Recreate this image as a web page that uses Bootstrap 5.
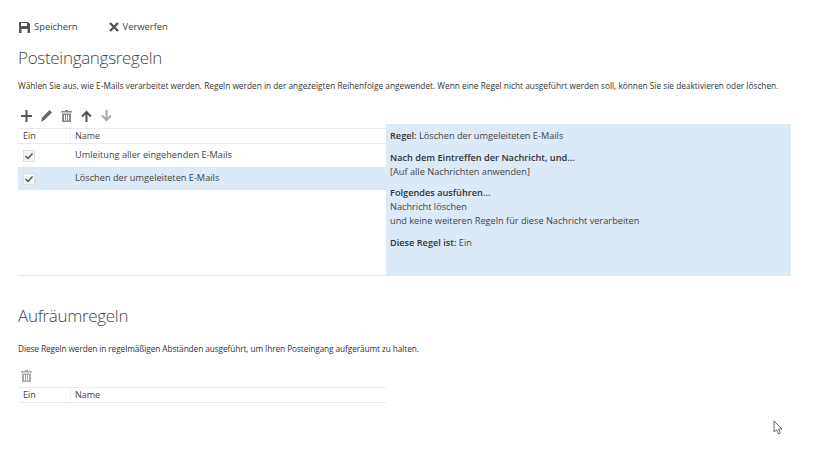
<!DOCTYPE html>
<html lang="de"><head><meta charset="utf-8"><title>Regeln</title>
<link href="https://cdn.jsdelivr.net/npm/bootstrap@5.3.0/dist/css/bootstrap.min.css" rel="stylesheet">
<style>
html,body{height:100%;overflow:hidden}
body{font-family:"Open Sans","Noto Sans",sans-serif;font-size:9.2px;line-height:14px;color:#333;background:#fff}
.pg{padding:20px 29px 0 18px;position:relative;height:470px}
.tb{height:14px;gap:31px;margin-left:1px;font-size:9.4px;color:#444}
.ttl{font-family:"Open Sans",sans-serif;font-weight:300;font-size:17px;letter-spacing:-.3px;line-height:24px;color:#444;margin:0}
.t1{margin-top:12px}
.ds{color:#333;margin:0;white-space:nowrap}
.d1{margin-top:9px;font-size:8.3px}
.d2{margin-top:14px;font-size:8.3px;letter-spacing:-.1px}
.ic{height:16px;margin-top:15px;gap:9px;padding-left:3px}
.lft{width:368px;flex:none}
.split{height:152px;border-bottom:1px solid #e6e6e6}
.pnl{background:#dce9f7;flex:1;padding:5px 4px;font-size:9.2px;line-height:14px;color:#444}
.pnl p{margin:0 0 7.5px}
.pnl b{font-weight:600;color:#333}
.hd{height:16px;border-top:1px solid #eaeaea;border-bottom:1px solid #eaeaea;color:#444;font-size:9px;align-items:center}
.c1{width:53px;padding-left:5px;border-right:1px solid #f0f0f0;height:100%;line-height:14px;flex:none}
.c2{padding-left:4px}
.rw{height:23px;align-items:center;color:#444;font-size:9.2px}
.rw .c1{border:0;padding-left:5px;display:flex;align-items:center}
.rw .c2{padding-left:4px;margin-top:-2px}
.sel{background:#dce9f7}
.ck{width:12px;height:12px;background:#f7f7f7;border:1px solid #ddd;display:block}
.t2{margin-top:28px}
.ic2{margin-top:12px;height:16px;padding-left:3px}
.hd2{margin-top:3px}
.cur{position:absolute;left:773px;top:420px}
</style></head><body>
<div class="pg">
<div class="d-flex align-items-center tb">
<span class="d-flex align-items-center gap-1"><svg width="11" height="11" viewBox="0 0 11 11"><path fill="#555" d="M0 0h9l2 2v9H0zM2 1v3h6V1zM2.500 7v4h6V7z"/></svg>Speichern</span>
<span class="d-flex align-items-center gap-1"><svg width="10" height="10" viewBox="0 0 10 10"><path stroke="#555" stroke-width="2.400" d="M1 1l8 8M9 1l-8 8"/></svg>Verwerfen</span>
</div>
<h1 class="ttl t1">Posteingangsregeln</h1>
<p class="ds d1">Wählen Sie aus, wie E-Mails verarbeitet werden. Regeln werden in der angezeigten Reihenfolge angewendet. Wenn eine Regel nicht ausgeführt werden soll, können Sie sie deaktivieren oder löschen.</p>
<div class="d-flex align-items-center ic">
<svg width="11" height="12" viewBox="0 0 11 12"><path stroke="#555" stroke-width="2" d="M5.500 0v12M0 6h11"/></svg>
<svg width="11" height="12" viewBox="0 0 11 12"><path fill="#666" d="M8.500 0l2.500 2.500-7.300 7.300L0 12l1.200-4.500z"/></svg>
<svg width="11" height="12" viewBox="0 0 11 12"><path fill="#8a8a8a" d="M4 0h3v1h4v1.500H0V1h4zM1 3.500h9V12H1zM3 5v5.500h1V5zM5 5v5.500h1V5zM7 5v5.500h1V5z" fill-rule="evenodd"/></svg>
<svg width="11" height="12" viewBox="0 0 11 12"><path stroke="#555" stroke-width="2" fill="none" d="M5.500 12V2M1 6.500L5.500 2l4.500 4.500"/></svg>
<svg width="11" height="12" viewBox="0 0 11 12"><path stroke="#aaa" stroke-width="2" fill="none" d="M5.500 0v10M1 5.500L5.500 10l4.500-4.500"/></svg>
</div>
<div class="d-flex split">
<div class="lft pt-1">
<div class="d-flex hd"><div class="c1">Ein</div><div class="c2">Name</div></div>
<div class="d-flex rw"><div class="c1"><span class="ck"><svg width="10" height="10" viewBox="0 0 10 10" class="d-block"><path fill="none" stroke="#555" stroke-width="1.500" d="M1.500 5l2.500 2.500 4.500-5"/></svg></span></div><div class="c2">Umleitung aller eingehenden E-Mails</div></div>
<div class="d-flex rw sel"><div class="c1"><span class="ck"><svg width="10" height="10" viewBox="0 0 10 10" class="d-block"><path fill="none" stroke="#555" stroke-width="1.500" d="M1.500 5l2.500 2.500 4.500-5"/></svg></span></div><div class="c2">Löschen der umgeleiteten E-Mails</div></div>
</div>
<div class="pnl">
<p><b>Regel:</b> Löschen der umgeleiteten E-Mails</p>
<p><b>Nach dem Eintreffen der Nachricht, und...</b><br>[Auf alle Nachrichten anwenden]</p>
<p><b>Folgendes ausführen...</b><br>Nachricht löschen<br>und keine weiteren Regeln für diese Nachricht verarbeiten</p>
<p><b>Diese Regel ist:</b> Ein</p>
</div>
</div>
<h2 class="ttl t2">Aufräumregeln</h2>
<p class="ds d2">Diese Regeln werden in regelmäßigen Abständen ausgeführt, um Ihren Posteingang aufgeräumt zu halten.</p>
<div class="d-flex align-items-center ic2"><svg width="11" height="12" viewBox="0 0 11 12"><path fill="#aaa" d="M4 0h3v1h4v1.500H0V1h4zM1 3.500h9V12H1zM3 5v5.500h1V5zM5 5v5.500h1V5zM7 5v5.500h1V5z" fill-rule="evenodd"/></svg></div>
<div class="lft hd2"><div class="d-flex hd"><div class="c1">Ein</div><div class="c2">Name</div></div></div>
<svg class="cur" width="11" height="15" viewBox="0 0 11 15"><path fill="#fff" stroke="#666" d="M1 1v11l2.500-2.300L5.500 14l2-1-2-4H9z"/></svg>
</div>
</body></html>
